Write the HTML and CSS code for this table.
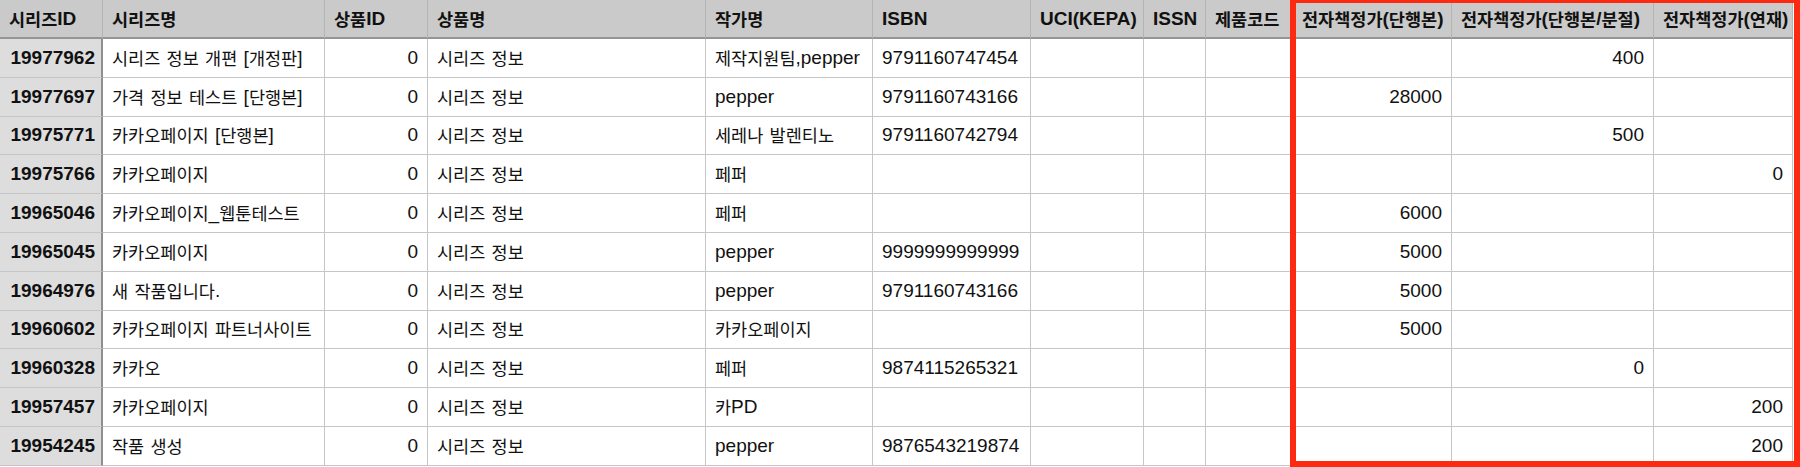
FILE: index.html
```html
<!DOCTYPE html>
<html lang="ko">
<head>
<meta charset="utf-8">
<title>시리즈 목록</title>
<link rel="stylesheet" href="styles.css">
</head>
<body>
<div class="page">
  <div class="sheet">
    <div class="c h first"><span class="k">시리즈</span>ID</div>
    <div class="c h"><span class="k">시리즈명</span></div>
    <div class="c h"><span class="k">상품</span>ID</div>
    <div class="c h"><span class="k">상품명</span></div>
    <div class="c h"><span class="k">작가명</span></div>
    <div class="c h">ISBN</div>
    <div class="c h">UCI(KEPA)</div>
    <div class="c h">ISSN</div>
    <div class="c h"><span class="k">제품코드</span></div>
    <div class="c h"><span class="k">전자책정가</span>(<span class="k">단행본</span>)</div>
    <div class="c h"><span class="k">전자책정가</span>(<span class="k">단행본</span>/<span class="k">분절</span>)</div>
    <div class="c h"><span class="k">전자책정가</span>(<span class="k">연재</span>)</div>

    <div class="c id">19977962</div><div class="c"><span class="k">시리즈 정보 개편 </span>[<span class="k">개정판</span>]</div><div class="c num">0</div><div class="c"><span class="k">시리즈 정보</span></div><div class="c"><span class="k">제작지원팀</span>,pepper</div><div class="c">9791160747454</div><div class="c"></div><div class="c"></div><div class="c"></div><div class="c num"></div><div class="c num">400</div><div class="c num"></div>

    <div class="c id">19977697</div><div class="c"><span class="k">가격 정보 테스트 </span>[<span class="k">단행본</span>]</div><div class="c num">0</div><div class="c"><span class="k">시리즈 정보</span></div><div class="c">pepper</div><div class="c">9791160743166</div><div class="c"></div><div class="c"></div><div class="c"></div><div class="c num">28000</div><div class="c num"></div><div class="c num"></div>

    <div class="c id">19975771</div><div class="c"><span class="k">카카오페이지 </span>[<span class="k">단행본</span>]</div><div class="c num">0</div><div class="c"><span class="k">시리즈 정보</span></div><div class="c"><span class="k">세레나 발렌티노</span></div><div class="c">9791160742794</div><div class="c"></div><div class="c"></div><div class="c"></div><div class="c num"></div><div class="c num">500</div><div class="c num"></div>

    <div class="c id">19975766</div><div class="c"><span class="k">카카오페이지</span></div><div class="c num">0</div><div class="c"><span class="k">시리즈 정보</span></div><div class="c"><span class="k">페퍼</span></div><div class="c"></div><div class="c"></div><div class="c"></div><div class="c"></div><div class="c num"></div><div class="c num"></div><div class="c num">0</div>

    <div class="c id">19965046</div><div class="c"><span class="k">카카오페이지</span>_<span class="k">웹툰테스트</span></div><div class="c num">0</div><div class="c"><span class="k">시리즈 정보</span></div><div class="c"><span class="k">페퍼</span></div><div class="c"></div><div class="c"></div><div class="c"></div><div class="c"></div><div class="c num">6000</div><div class="c num"></div><div class="c num"></div>

    <div class="c id">19965045</div><div class="c"><span class="k">카카오페이지</span></div><div class="c num">0</div><div class="c"><span class="k">시리즈 정보</span></div><div class="c">pepper</div><div class="c">9999999999999</div><div class="c"></div><div class="c"></div><div class="c"></div><div class="c num">5000</div><div class="c num"></div><div class="c num"></div>

    <div class="c id">19964976</div><div class="c"><span class="k">새 작품입니다</span>.</div><div class="c num">0</div><div class="c"><span class="k">시리즈 정보</span></div><div class="c">pepper</div><div class="c">9791160743166</div><div class="c"></div><div class="c"></div><div class="c"></div><div class="c num">5000</div><div class="c num"></div><div class="c num"></div>

    <div class="c id">19960602</div><div class="c"><span class="k">카카오페이지 파트너사이트</span></div><div class="c num">0</div><div class="c"><span class="k">시리즈 정보</span></div><div class="c"><span class="k">카카오페이지</span></div><div class="c"></div><div class="c"></div><div class="c"></div><div class="c"></div><div class="c num">5000</div><div class="c num"></div><div class="c num"></div>

    <div class="c id">19960328</div><div class="c"><span class="k">카카오</span></div><div class="c num">0</div><div class="c"><span class="k">시리즈 정보</span></div><div class="c"><span class="k">페퍼</span></div><div class="c">9874115265321</div><div class="c"></div><div class="c"></div><div class="c"></div><div class="c num"></div><div class="c num">0</div><div class="c num"></div>

    <div class="c id">19957457</div><div class="c"><span class="k">카카오페이지</span></div><div class="c num">0</div><div class="c"><span class="k">시리즈 정보</span></div><div class="c"><span class="k">카</span>PD</div><div class="c"></div><div class="c"></div><div class="c"></div><div class="c"></div><div class="c num"></div><div class="c num"></div><div class="c num">200</div>

    <div class="c id">19954245</div><div class="c"><span class="k">작품 생성</span></div><div class="c num">0</div><div class="c"><span class="k">시리즈 정보</span></div><div class="c">pepper</div><div class="c">9876543219874</div><div class="c"></div><div class="c"></div><div class="c"></div><div class="c num"></div><div class="c num"></div><div class="c num">200</div>
  </div>
  <div class="highlight"></div>
</div>
</body>
</html>
```

FILE: styles.css
```css
html, body {
  margin: 0;
  padding: 0;
  background: #ffffff;
}

body {
  width: 1800px;
  height: 467px;
  overflow: hidden;
  font-family: "Liberation Sans", "Noto Sans CJK KR", sans-serif;
  color: #111111;
}

.page {
  position: relative;
  width: 1800px;
  height: 467px;
}

.sheet {
  display: grid;
  grid-template-columns: 103px 222px 103px 278px 167px 158px 113px 62px 87px 159px 202px 139px;
  grid-template-rows: 39px;
  grid-auto-rows: 38.8px;
  width: 1793px;
}

.c {
  box-sizing: border-box;
  display: flex;
  align-items: center;
  padding: 0 9px;
  border-right: 1px solid #c6c6c6;
  border-bottom: 1px solid #c6c6c6;
  font-size: 19px;
  line-height: 22px;
  white-space: pre;
  overflow: hidden;
}

.k {
  font-family: "Noto Sans CJK KR", sans-serif;
  font-size: 17.5px;
  word-spacing: 1.4px;
}

.num {
  justify-content: flex-end;
}

.h {
  background: #c9cac9;
  font-weight: bold;
  border-bottom: 2px solid #959595;
  border-right-color: #b4b4b4;
}

.id {
  background: #dddddd;
  font-weight: bold;
  justify-content: flex-end;
  padding-right: 6px;
  border-right: 2px solid #8f8f8f;
}

.highlight {
  position: absolute;
  left: 1290px;
  top: -3px;
  width: 510px;
  height: 470px;
  box-sizing: border-box;
  border: 6px solid #fb2a10;
  pointer-events: none;
}
```
